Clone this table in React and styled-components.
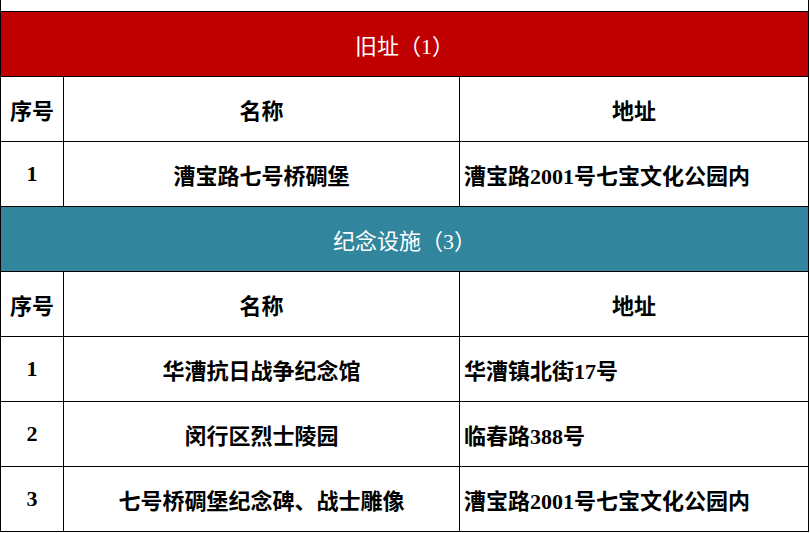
import React from "react";
import styled, { createGlobalStyle } from "styled-components";

const GlobalStyle = createGlobalStyle`
  html, body {
    margin: 0;
    padding: 0;
    background: #fff;
  }
`;

const sections = [
  {
    title: "旧址（1）",
    tone: "#c00000",
    rows: [["1", "漕宝路七号桥碉堡", "漕宝路2001号七宝文化公园内"]],
  },
  {
    title: "纪念设施（3）",
    tone: "#31859c",
    rows: [
      ["1", "华漕抗日战争纪念馆", "华漕镇北街17号"],
      ["2", "闵行区烈士陵园", "临春路388号"],
      ["3", "七号桥碉堡纪念碑、战士雕像", "漕宝路2001号七宝文化公园内"],
    ],
  },
];

function App() {
  return (
    <>
      <GlobalStyle />
      <Sheet>
        <TopStrip />
        {sections.map((s) => (
          <React.Fragment key={s.title}>
            <Band $tone={s.tone}>{s.title}</Band>
            <Cell>序号</Cell>
            <Cell>名称</Cell>
            <Cell>地址</Cell>
            {s.rows.map((r) => (
              <React.Fragment key={r[0] + r[1]}>
                <Cell>{r[0]}</Cell>
                <Cell>{r[1]}</Cell>
                <Cell $align="left">{r[2]}</Cell>
              </React.Fragment>
            ))}
          </React.Fragment>
        ))}
      </Sheet>
    </>
  );
}

const Sheet = styled.div`
  display: grid;
  grid-template-columns: 62px 395px 348px;
  grid-template-rows: 11px repeat(8, 64px);
  gap: 1px;
  width: 807px;
  padding: 0 1px 1px 1px;
  background: #000;
  font-family: "Liberation Serif", "Noto Sans CJK SC", serif;
  font-size: 22px;
`;

const TopStrip = styled.div`
  grid-column: 1 / -1;
  background: #fff;
`;

const Band = styled.div`
  grid-column: 1 / -1;
  display: flex;
  align-items: center;
  justify-content: center;
  background: ${(p) => p.$tone};
  color: #fff;
  font-weight: 400;
`;

const Cell = styled.div`
  display: flex;
  align-items: center;
  justify-content: ${(p) => (p.$align === "left" ? "flex-start" : "center")};
  padding: ${(p) => (p.$align === "left" ? "0 0 0 4px" : "0")};
  background: #fff;
  color: #000;
  font-weight: 700;
`;

export default App;
